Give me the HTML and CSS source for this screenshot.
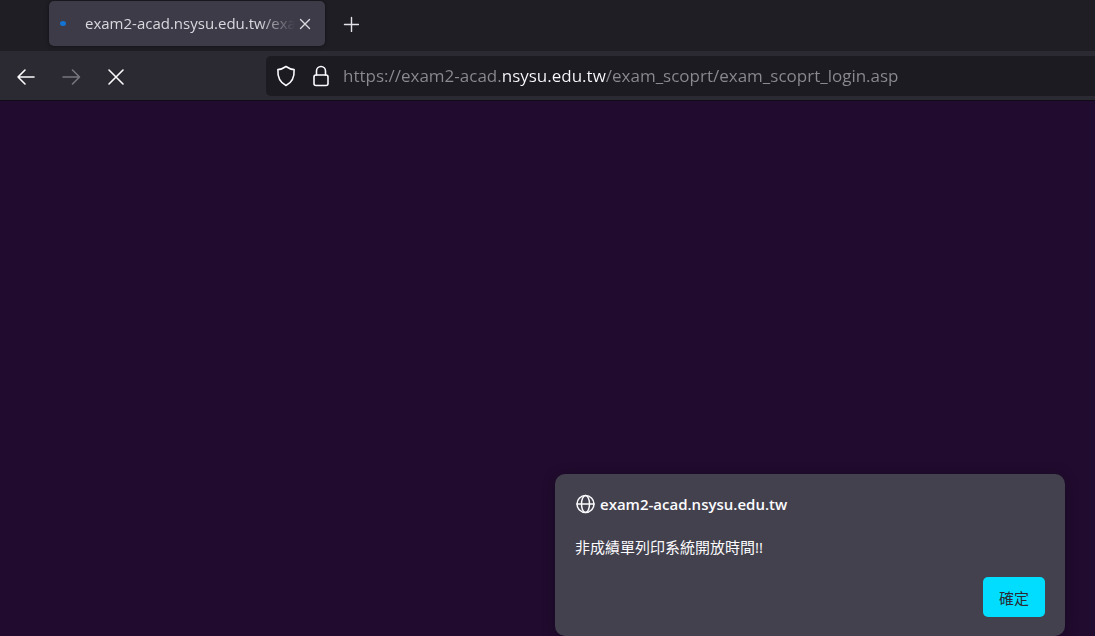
FILE: index.html
```html
<!DOCTYPE html>
<html lang="zh-Hant">

<head>
  <meta charset="UTF-8" />
  <title>exam2-acad.nsysu.edu.tw</title>
  <meta name="viewport" content="width=device-width, initial-scale=1.0">
  <link rel="stylesheet" href="styles.css">
</head>

<body>
  <header>
    <div class="tab-strip">
      <div class="tab">
        <span class="loading-dot"></span>
        <span class="tab-title">exam2-acad.nsysu.edu.tw/exa</span>
        <button class="tab-close" aria-label="關閉分頁">
          <svg width="12" height="12" viewBox="0 0 12 12"><path d="M1.5 1.5l9 9M10.500 1.500l-9 9" /></svg>
        </button>
      </div>
      <button class="new-tab" aria-label="新分頁">
        <svg width="16" height="16" viewBox="0 0 16 16"><path d="M8.500 1.500v14M1.500 8.500h14" /></svg>
      </button>
    </div>
    <div class="toolbar">
      <nav class="nav-buttons">
        <button aria-label="上一頁">
          <svg width="20" height="20" viewBox="0 0 20 20"><path d="M18 10H2M9 3L2 10l7 7" /></svg>
        </button>
        <button aria-label="下一頁" disabled>
          <svg width="20" height="20" viewBox="0 0 20 20"><path d="M2 10h16.500M11.500 3l7 7-7 7" /></svg>
        </button>
        <button aria-label="停止">
          <svg width="20" height="20" viewBox="0 0 20 20"><path d="M3 3l14 14M17 3L3 17" /></svg>
        </button>
      </nav>
      <div class="url-bar">
        <svg width="20" height="22" viewBox="0 0 20 22"><path d="M10 1.500Q6 4.300 1.900 4.600C1.500 11 3 17 10 20.500C17 17 18.500 11 18.100 4.600Q14 4.300 10 1.500z" /></svg>
        <svg width="20" height="22" viewBox="0 0 20 22"><rect x="3" y="10" width="14" height="10.500" rx="2" /><path d="M5.500 10V6a4.500 4.500 0 0 1 9 0v4" /></svg>
        <input class="url-input" type="text" aria-label="網址" spellcheck="false" value="https://exam2-acad.nsysu.edu.tw/exam_scoprt/exam_scoprt_login.asp">
      </div>
    </div>
  </header>
  <main class="page">
    <dialog class="alert" open aria-labelledby="alert-host">
      <h1 class="alert-host" id="alert-host">
        <svg width="20" height="20" viewBox="0 0 20 20"><circle cx="10.500" cy="10" r="8.500" /><ellipse cx="10.500" cy="10" rx="4" ry="8.500" /><path d="M2 10h17" /></svg>
        exam2-acad.nsysu.edu.tw
      </h1>
      <p class="alert-text">非成績單列印系統開放時間!!</p>
      <form class="alert-actions" method="dialog">
        <button class="alert-ok">確定</button>
      </form>
    </dialog>
  </main>
</body>

</html>
```

FILE: styles.css
```css
* {
  box-sizing: border-box;
}

body {
  margin: 0;
  min-height: 100vh;
  display: flex;
  flex-direction: column;
  background: #210b2f;
  color: #fbfbfe;
  font-family: "Open Sans", "Noto Sans CJK TC", sans-serif;
}

button {
  padding: 0;
  border: none;
  background: none;
  color: inherit;
  font-family: inherit;
  display: flex;
  align-items: center;
  justify-content: center;
}

svg {
  flex-shrink: 0;
  fill: none;
  stroke: currentColor;
  stroke-width: 1.6;
  stroke-linecap: round;
  stroke-linejoin: round;
}

/* tabs */
.tab-strip {
  display: flex;
  align-items: center;
  height: 51px;
  padding: 0 48px 4px 49px;
  background: #1f1e25;
}

.tab {
  display: flex;
  align-items: center;
  width: 276px;
  height: 45px;
  padding: 0 10px 0 11px;
  border-radius: 5px;
  background: #3d3b47;
  box-shadow: 0 0 4px rgba(0, 0, 0, 0.5);
}

.loading-dot {
  width: 6px;
  height: 5px;
  margin-right: 19px;
  border-radius: 50%;
  background: #1474d4;
}

.tab-title {
  flex: 1;
  min-width: 0;
  padding-bottom: 2px;
  white-space: nowrap;
  font-size: 15px;
  line-height: 24px;
  color: #d9d8de;
  mask-image: linear-gradient(to left, transparent, #000 36px);
}

.tab-close {
  width: 20px;
  height: 20px;
  color: #d9d8de;
}

.tab-close svg,
.new-tab svg {
  stroke-width: 1.4;
}

.new-tab {
  width: 36px;
  height: 36px;
  margin-left: 8px;
  color: #e4e3e8;
}

/* address bar */
.toolbar {
  display: flex;
  align-items: center;
  height: 50px;
  border-bottom: 1px solid #100c16;
  background: #2b2a32;
}

.nav-buttons {
  display: flex;
  gap: 5px;
  width: 266px;
  padding: 2px 0 0 6px;
}

.nav-buttons button {
  width: 40px;
  height: 40px;
}

.nav-buttons button:disabled {
  color: #77757f;
}

.url-bar {
  flex: 1;
  min-width: 0;
  display: flex;
  align-items: center;
  gap: 15px;
  height: 40px;
  padding-left: 10px;
  border-radius: 5px 0 0 5px;
  background: #1c1b22;
}

/* the registered domain is brighter than the rest of the address */
.url-input {
  flex: 1;
  min-width: 0;
  height: 32px;
  margin-left: -3px;
  padding: 0;
  border: none;
  outline: none;
  font-family: inherit;
  font-size: 17px;
  color: transparent;
  background: linear-gradient(to right, #8b8a90 159px, #fbfbfe 159px, #fbfbfe 263px, #8b8a90 263px);
  background-clip: text;
}

/* page and its alert */
.page {
  flex: 1;
  display: flex;
  align-items: flex-end;
  justify-content: flex-end;
  padding: 20px 30px 0;
}

.alert {
  position: static;
  width: 510px;
  max-width: 100%;
  margin: 0;
  padding: 19px 20px;
  border: none;
  border-radius: 10px;
  background: #43414d;
  color: inherit;
  box-shadow: 0 2px 14px rgba(0, 0, 0, 0.3);
}

.alert-host {
  display: flex;
  align-items: center;
  gap: 5px;
  margin: 0 0 21px;
  font-size: 15px;
  font-weight: 600;
  line-height: 22px;
}

.alert-host svg {
  stroke-width: 1.5;
}

.alert-text {
  margin: 0 0 19px;
  font-size: 15px;
  line-height: 22px;
}

.alert-actions {
  display: flex;
  justify-content: flex-end;
}

.alert-ok {
  width: 62px;
  height: 40px;
  border-radius: 5px;
  background: #00ddff;
  color: #2b2a33;
  font-size: 15px;
}
```
